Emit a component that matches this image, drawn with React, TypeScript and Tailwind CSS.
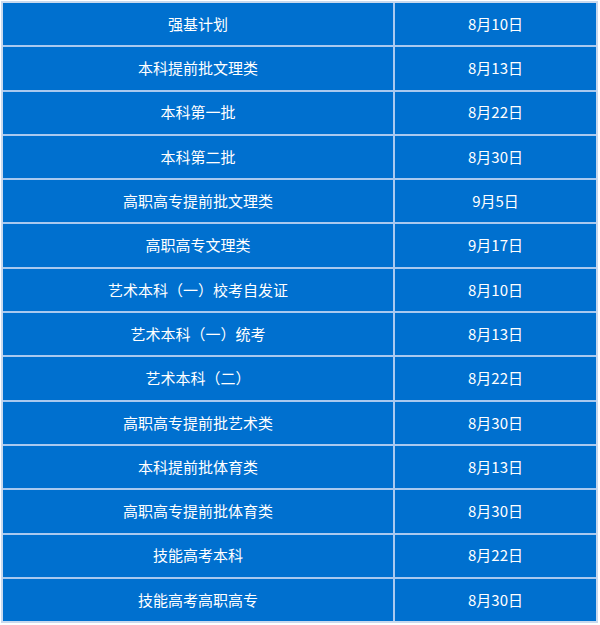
const rows: [string, string][] = [
  ['强基计划', '8月10日'],
  ['本科提前批文理类', '8月13日'],
  ['本科第一批', '8月22日'],
  ['本科第二批', '8月30日'],
  ['高职高专提前批文理类', '9月5日'],
  ['高职高专文理类', '9月17日'],
  ['艺术本科（一）校考自发证', '8月10日'],
  ['艺术本科（一）统考', '8月13日'],
  ['艺术本科（二）', '8月22日'],
  ['高职高专提前批艺术类', '8月30日'],
  ['本科提前批体育类', '8月13日'],
  ['高职高专提前批体育类', '8月30日'],
  ['技能高考本科', '8月22日'],
  ['技能高考高职高专', '8月30日'],
]

export default function App() {
  return (
    <div className="w-[600px] h-[625px] bg-white pt-px pl-px">
      <div
        className="w-[597px] border-2 border-[#c9d9ee] bg-[#0070cf] text-white text-[15px]"
        style={{ fontFamily: '"Noto Sans CJK SC", "Noto Sans", sans-serif' }}
      >
        {rows.map(([batch, date], i) => (
          <div
            key={i}
            className={`flex h-[42.3px] ${i > 0 ? 'border-t-2 border-[#a9c9ef]' : ''} box-content`}
          >
            <div className="w-[392px] flex items-center justify-center border-r-2 border-[#a9c9ef]">
              {batch}
            </div>
            <div className="flex-1 flex items-center justify-center">{date}</div>
          </div>
        ))}
      </div>
    </div>
  )
}
